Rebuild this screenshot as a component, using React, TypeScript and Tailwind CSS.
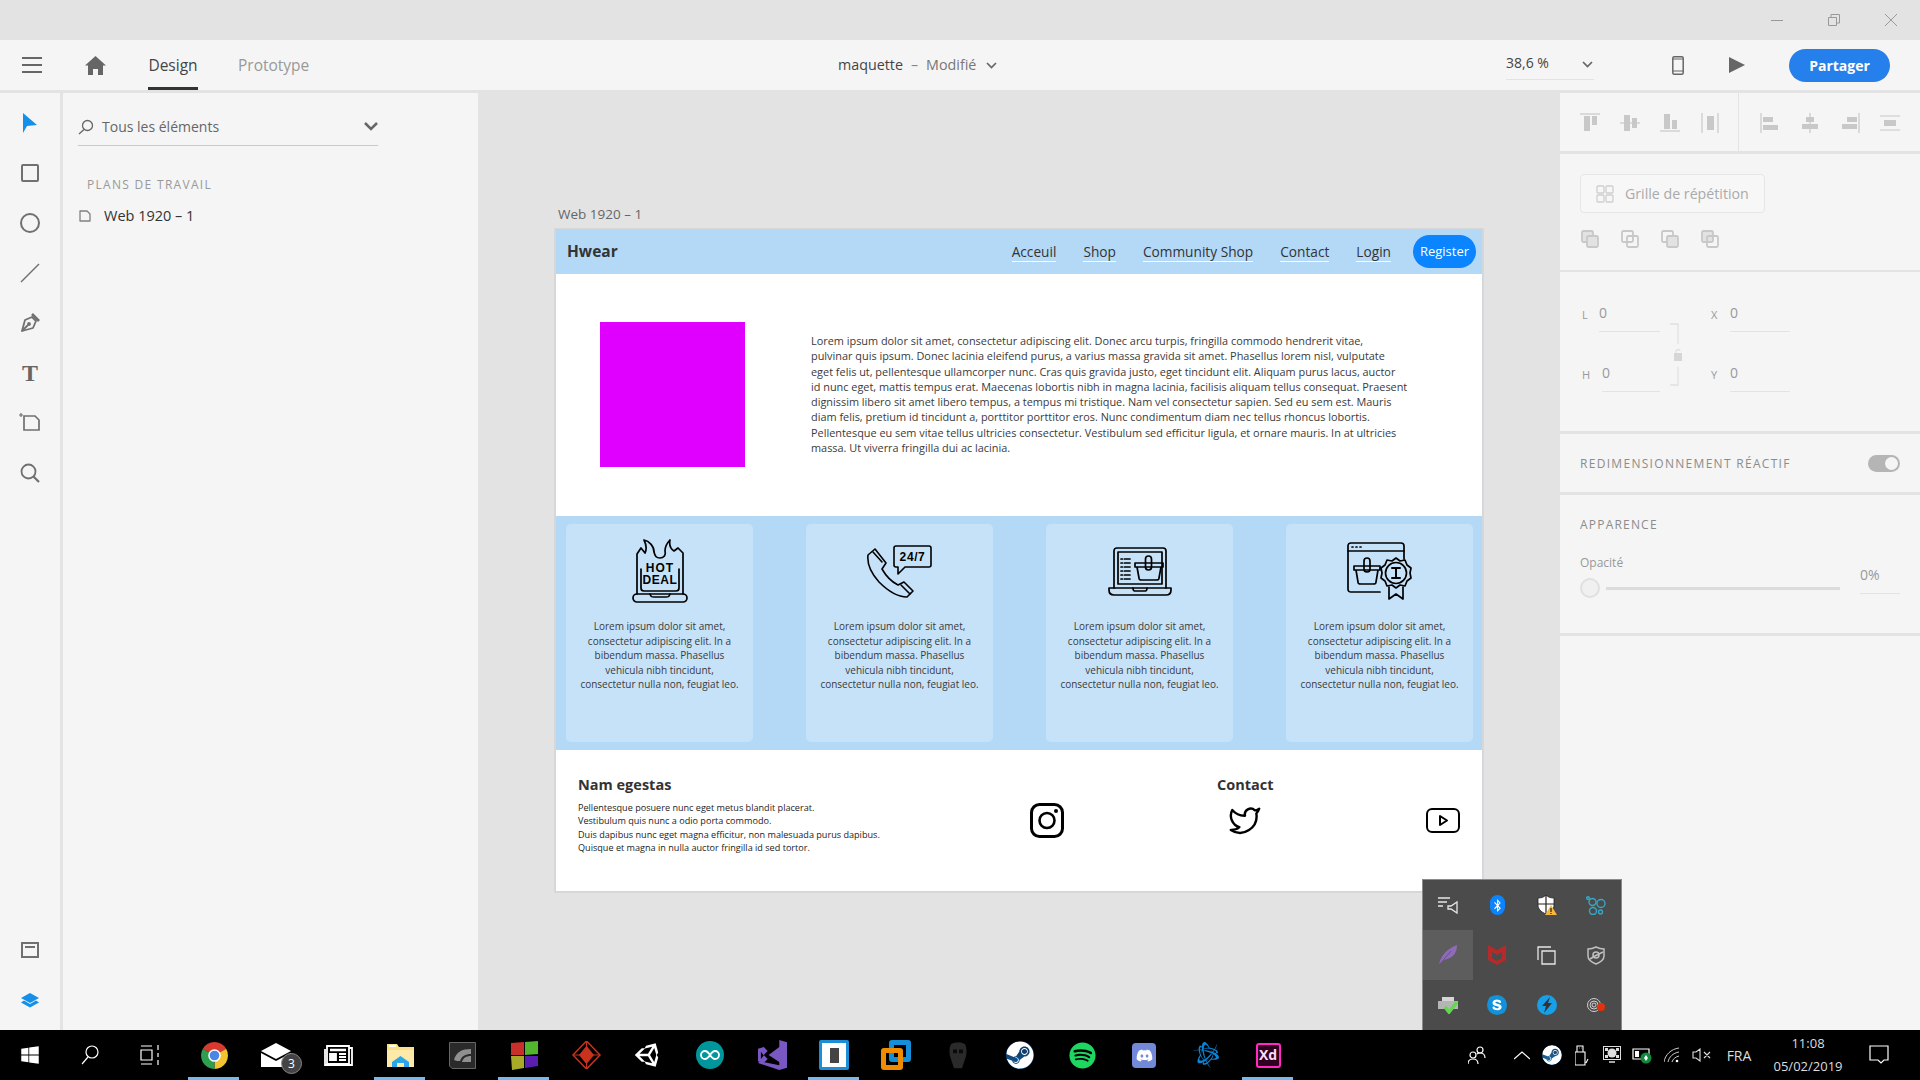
import React from 'react';
import { FaBluetoothB, FaDiscord, FaSkype, FaSpotify, FaSteam, FaUnity, FaWindows } from 'react-icons/fa';
import { FaBattleNet } from 'react-icons/fa6';
import { Twitter } from 'lucide-react';

const lorem = [
  'Lorem ipsum dolor sit amet, consectetur adipiscing elit. Donec arcu turpis, fringilla commodo hendrerit vitae,',
  'pulvinar quis ipsum. Donec lacinia eleifend purus, a varius massa gravida sit amet. Phasellus lorem nisl, vulputate',
  'eget felis ut, pellentesque ullamcorper nunc. Cras quis gravida justo, eget tincidunt elit. Aliquam purus lacus, auctor',
  'id nunc eget, mattis tempus erat. Maecenas lobortis nibh in magna lacinia, facilisis aliquam tellus consequat. Praesent',
  'dignissim libero sit amet libero tempus, a tempus mi tristique. Nam vel consectetur sapien. Sed eu sem est. Mauris',
  'diam felis, pretium id tincidunt a, porttitor porttitor eros. Nunc condimentum diam nec tellus rhoncus lobortis.',
  'Pellentesque eu sem vitae tellus ultricies consectetur. Vestibulum sed efficitur ligula, et ornare mauris. In at ultricies',
  'massa. Ut viverra fringilla dui ac lacinia.',
];

const cardLines = [
  'Lorem ipsum dolor sit amet,',
  'consectetur adipiscing elit. In a',
  'bibendum massa. Phasellus',
  'vehicula nibh tincidunt,',
  'consectetur nulla non, feugiat leo.',
];

const footerLines = [
  'Pellentesque posuere nunc eget metus blandit placerat.',
  'Vestibulum quis nunc a odio porta commodo.',
  'Duis dapibus nunc eget magna efficitur, non malesuada purus dapibus.',
  'Quisque et magna in nulla auctor fringilla id sed tortor.',
];

const HotDealIcon = () => (
  <svg width="56" height="64" viewBox="0 0 56 64" fill="none" stroke="#000" strokeWidth="1.7" strokeLinejoin="round" strokeLinecap="round">
    <rect x="1" y="55" width="54" height="8" rx="4" />
    <path d="M18 55c1 3 2 3 4 3h12c2 0 3 0 4-3" />
    <path d="M5 55V15l4-6 4 5c2-4 1-9-1-13 5 1 10 6 10 12 1 4 2 6 6 6 4 0 6-3 5-7 0-4 2-8 5-11-1 5 1 9 4 11l4-3 5 5v41" />
    <path d="M9 30v19c0 2 1 3 3 3h32c2 0 3-1 3-3V30" />
    <text x="28" y="33" textAnchor="middle" fontFamily="'Liberation Sans', sans-serif" fontWeight="700" fontSize="12" fill="#000" stroke="none" letterSpacing="1">HOT</text>
    <text x="28" y="45" textAnchor="middle" fontFamily="'Liberation Sans', sans-serif" fontWeight="700" fontSize="12" fill="#000" stroke="none" letterSpacing="0.6">DEAL</text>
  </svg>
);

const PhoneIcon = () => (
  <svg width="65" height="53" viewBox="0 0 65 53" fill="none" stroke="#000" strokeWidth="1.6" strokeLinejoin="round" strokeLinecap="round">
    <path d="M8 4 1 10c-1 8 3 18 11 27 8 8 18 15 28 15l6-6-9-9-6 3c-6-3-12-9-16-16l4-6z" />
    <path d="m6 7 9 10M34 40l9 9" />
    <path d="M29 1h33c1 0 2 1 2 2v17c0 1-1 2-2 2H38l-7 7v-7h-2c-1 0-2-1-2-2V3c0-1 1-2 2-2z" />
    <text x="45.5" y="16" textAnchor="middle" fontFamily="'Liberation Sans', sans-serif" fontWeight="700" fontSize="12" fill="#000" stroke="none" letterSpacing="0.6">24/7</text>
  </svg>
);

const LaptopBasketIcon = () => (
  <svg width="64" height="49" viewBox="0 0 64 49" fill="none" stroke="#000" strokeWidth="1.7" strokeLinejoin="round" strokeLinecap="round">
    <path d="M6 41V4c0-2 1-3 3-3h46c2 0 3 1 3 3v37" />
    <path d="M10 37V5h44v32z" />
    <path d="M1 41h62v2c0 3-2 5-5 5H6c-3 0-5-2-5-5z" />
    <path d="M25 41c0 3 1 3 3 3h8c2 0 3 0 3-3" />
    <path d="M13 12h9M13 16h9M13 20h9M13 24h9M13 28h9M13 32h9" strokeDasharray="1.5 2 6 0" />
    <path d="M27 16h28v4H27zM29 20l2 11c0 2 1 2 3 2h14c2 0 3 0 3-2l2-11" />
    <rect x="37.5" y="9" width="6" height="14" rx="3" />
  </svg>
);

const BadgeBasketIcon = () => (
  <svg width="65" height="58" viewBox="0 0 65 58" fill="none" stroke="#000" strokeWidth="1.7" strokeLinejoin="round" strokeLinecap="round">
    <path d="M33 50H4c-2 0-3-1-3-3V4c0-2 1-3 3-3h50c2 0 3 1 3 3v13" />
    <path d="M1 9h56" />
    <path d="M5 5h1M9 5h1M13 5h1" />
    <path d="M7 24h26v4H7zM9 28l2 12c0 2 1 2 3 2h12c2 0 3 0 3-2l2-12" />
    <rect x="17" y="16" width="6" height="14" rx="3" />
    <circle cx="49" cy="31" r="10.5" />
    <path d="m49 16 4 3 5-1 2 5 4 3-1 5 1 5-4 3-2 5-5-1-4 3-4-3-5 1-2-5-4-3 1-5-1-5 4-3 2-5 5 1z" />
    <path d="M45 26h8M45 36h8M49 26v10" strokeWidth="2" />
    <path d="M42 45v12l7-5 7 5V45" />
  </svg>
);

const YoutubeIcon = () => (
  <svg width="34" height="25" viewBox="0 0 34 25" fill="none" stroke="#000" strokeWidth="2" strokeLinejoin="round">
    <rect x="1" y="1" width="32" height="23" rx="5" />
    <path d="M14 8v9l7-4.5z" />
  </svg>
);

const InstagramIcon = () => (
  <svg width="34" height="35" viewBox="0 0 34 35" fill="none" stroke="#000" strokeWidth="3">
    <rect x="1.5" y="1.5" width="31" height="32" rx="8" />
    <circle cx="17" cy="17.5" r="7.5" strokeWidth="2.6" />
    <circle cx="26" cy="8" r="2" fill="#000" stroke="none" />
  </svg>
);

const Card = ({ icon }: { icon: React.ReactNode }) => (
  <div className="bg-[#c6e2f9] rounded-[5px] h-[218px] pt-[15px] flex flex-col items-center">
    <div className="h-[64px] flex items-center justify-center">{icon}</div>
    <div className="mt-[16px] text-center text-[10px] leading-[14.5px] text-[#3a3a3a]">
      {cardLines.map((l) => (
        <div key={l} className="whitespace-nowrap">{l}</div>
      ))}
    </div>
  </div>
);

const NavLink = ({ children }: { children: React.ReactNode }) => (
  <span className="text-[13.7px] leading-[19px] text-[#333] border-b border-white whitespace-nowrap">{children}</span>
);

const ToolIcon = ({ children }: { children: React.ReactNode }) => (
  <div className="h-[50px] w-full flex items-center justify-center">{children}</div>
);

const LeftToolbar = () => (
  <div className="w-[60px] bg-[#f5f5f5] flex flex-col pt-[5px] pb-[5px]">
    <ToolIcon>
      <svg width="16" height="22" viewBox="0 0 16 22"><path d="M1 1l14 12-10 1-4 7z" fill="#1490ea" /></svg>
    </ToolIcon>
    <ToolIcon><div className="w-[18px] h-[18px] border-[2px] border-[#707070] rounded-[2px]" /></ToolIcon>
    <ToolIcon><div className="w-[20px] h-[20px] border-[2px] border-[#707070] rounded-full" /></ToolIcon>
    <ToolIcon>
      <svg width="20" height="20" viewBox="0 0 20 20"><path d="M1 19 19 1" stroke="#707070" strokeWidth="1.5" /></svg>
    </ToolIcon>
    <ToolIcon>
      <svg width="20" height="20" viewBox="0 0 20 20" fill="none" stroke="#707070" strokeWidth="1.8" strokeLinejoin="round" className="-mt-[1px]">
        <path d="M2 18 5 7l7-3 4 4-3 7z" /><path d="M2 18l6-6" /><path d="m12 1 7 7" strokeWidth="2.6" /><circle cx="9" cy="11" r="1" />
      </svg>
    </ToolIcon>
    <ToolIcon>
      <span className="font-['Liberation_Serif',serif] font-bold text-[24px] leading-none text-[#666] -mt-[1px]">T</span>
    </ToolIcon>
    <ToolIcon>
      <svg width="22" height="20" viewBox="0 0 22 20" fill="none" stroke="#707070" strokeWidth="1.7">
        <path d="M5 3h11l4 4v10H5z" /><path d="M0 2h4M2 0v4" strokeWidth="1.2" />
      </svg>
    </ToolIcon>
    <ToolIcon>
      <svg width="20" height="20" viewBox="0 0 20 20" fill="none" stroke="#707070" strokeWidth="1.8">
        <circle cx="8.500" cy="8.500" r="7" /><path d="m13.500 13.500 5.500 5.500" strokeWidth="2.200" />
      </svg>
    </ToolIcon>
    <div className="flex-1" />
    <ToolIcon>
      <svg width="18" height="16" viewBox="0 0 18 16" fill="none" stroke="#707070" strokeWidth="2">
        <rect x="1" y="1" width="16" height="14" /><path d="M4 5h10" />
      </svg>
    </ToolIcon>
    <ToolIcon>
      <svg width="20" height="15" viewBox="0 0 20 15" fill="#1490ea">
        <path d="M10 0l9 5-9 5-9-5z" /><path d="M4 7.500 10 11l6-3.500 3 2-9 5-9-5z" />
      </svg>
    </ToolIcon>
  </div>
);

const LeftPanel = () => (
  <div className="w-[415px] bg-[#f5f5f5] ml-[3px] mr-[2px] pl-[15px]">
    <div className="w-[300px] h-[53px] border-b border-[#c9c9c9] flex items-center pt-[14px] mb-[31px]">
      <svg width="16" height="16" viewBox="0 0 16 16" fill="none" stroke="#666" strokeWidth="1.300" className="mr-[8px] mt-[2px]">
        <circle cx="9.500" cy="6.500" r="5" /><path d="M6 10.500 1 15" />
      </svg>
      <span className="text-[14px] text-[#666]">Tous les éléments</span>
      <svg width="14" height="9" viewBox="0 0 14 9" fill="none" stroke="#666" strokeWidth="2.500" className="ml-auto">
        <path d="m1 1 6 6 6-6" />
      </svg>
    </div>
    <div className="ml-[9px] text-[12px] leading-[16px] tracking-[1.300px] text-[#999] mb-[13px] whitespace-nowrap">PLANS DE TRAVAIL</div>
    <div className="flex items-center ml-[1px]">
      <svg width="12" height="12" viewBox="0 0 12 12" fill="none" stroke="#808080" strokeWidth="1.300" className="mr-[13px]">
        <path d="M1 1h7l3 3v7H1z" strokeLinejoin="round" />
      </svg>
      <span className="text-[14.500px] leading-[20px] text-[#333]">Web 1920 – 1</span>
    </div>
  </div>
);

const Artboard = () => (
  <div className="w-[928px] h-[663px] bg-white border-x border-b border-[#d3d7da] shadow-[0_0_0_1px_#d8d8d8] flex flex-col">
    <div className="h-[45px] bg-[#b3d9f7] flex items-center pl-[11px] pr-[6px]">
      <span className="text-[15.500px] font-bold text-[#333]">Hwear</span>
      <div className="ml-auto flex items-center gap-[27px]">
        <NavLink>Acceuil</NavLink>
        <NavLink>Shop</NavLink>
        <NavLink>Community Shop</NavLink>
        <NavLink>Contact</NavLink>
        <NavLink>Login</NavLink>
      </div>
      <div className="ml-[22px] w-[63px] h-[33px] rounded-full bg-[#0a84ff] text-white text-[13px] flex items-center justify-center">Register</div>
    </div>
    <div className="h-[242px] flex pl-[44px] pt-[48px]">
      <div className="w-[145px] h-[145px] bg-[#e000ff]" />
      <div className="ml-[66px] mt-[11px] text-[10.900px] leading-[15.300px] text-[#3a3a3a]">
        {lorem.map((l) => (
          <div key={l} className="whitespace-nowrap">{l}</div>
        ))}
      </div>
    </div>
    <div className="h-[234px] bg-[#b3d9f7] pl-[10px] pr-[9px] pt-[8px] grid grid-cols-4 gap-x-[53px] items-start">
      <Card icon={<HotDealIcon />} />
      <Card icon={<PhoneIcon />} />
      <Card icon={<LaptopBasketIcon />} />
      <Card icon={<BadgeBasketIcon />} />
    </div>
    <div className="flex-1 flex pl-[22px] pt-[25px]">
      <div className="w-[452px]">
        <div className="text-[14.500px] leading-[20px] font-bold text-[#333]">Nam egestas</div>
        <div className="mt-[6px] text-[9.100px] leading-[13.300px] text-[#222]">
          {footerLines.map((l) => (
            <div key={l} className="whitespace-nowrap">{l}</div>
          ))}
        </div>
      </div>
      <div className="w-[187px] pt-[28px]"><InstagramIcon /></div>
      <div className="w-[209px]">
        <div className="text-[14.500px] leading-[20px] font-bold text-[#333]">Contact</div>
        <div className="ml-[11px] mt-[8px]"><Twitter size={34} strokeWidth={1.7} color="#000" /></div>
      </div>
      <div className="pt-[33px]"><YoutubeIcon /></div>
    </div>
  </div>
);

const AlignIcon = ({ d, lines }: { d: string; lines: string }) => (
  <svg width="20" height="20" viewBox="0 0 20 20">
    <path d={d} fill="#c8c8c8" />
    <path d={lines} stroke="#c8c8c8" strokeWidth="1.200" fill="none" />
  </svg>
);

const BoolIcon = ({ fillA, fillB }: { fillA?: boolean; fillB?: boolean }) => (
  <svg width="18" height="18" viewBox="0 0 18 18" fill="none" stroke="#c8c8c8" strokeWidth="1.800">
    <rect x="1" y="1" width="11" height="11" rx="1.500" fill={fillA ? '#e2e2e2' : 'none'} />
    <rect x="6" y="6" width="11" height="11" rx="1.500" fill={fillB ? '#e2e2e2' : 'none'} />
  </svg>
);

const RightPanel = () => (
  <div className="w-[360px] flex flex-col bg-[#e3e3e3]">
    <div className="h-[58px] bg-[#f5f5f5] flex">
      <div className="w-[179px] border-r border-[#e3e3e3] flex items-center pl-[20px] pt-[2px] gap-[20px]">
        <AlignIcon d="M4 3h6v15H4zM12 3h5v9h-5z" lines="M0 1h20" />
        <AlignIcon d="M4 2h6v16H4zM12 5h5v10h-5z" lines="M0 10h20" />
        <AlignIcon d="M4 1h6v15H4zM12 7h5v9h-5z" lines="M0 18h20" />
        <AlignIcon d="M7 3h7v14H7z" lines="M2 0v20M18 0v20" />
      </div>
      <div className="flex-1 flex items-center pl-[21px] pt-[2px] gap-[20px]">
        <AlignIcon d="M3 4h10v5H3zM3 12h15v5H3z" lines="M1 0v20" />
        <AlignIcon d="M6 4h8v5H6zM2 11h16v5H2z" lines="M10 0v20" />
        <AlignIcon d="M7 4h10v5H7zM2 11h15v5H2z" lines="M19 0v20" />
        <AlignIcon d="M4 7h12v6H4z" lines="M0 3h20M0 17h20" />
      </div>
    </div>
    <div className="h-[116px] mt-[3px] bg-[#f5f5f5] pl-[20px] pt-[20px]">
      <div className="w-[185px] h-[39px] rounded-[4px] border border-[#e6e6e6] bg-[#f7f7f7] flex items-center pl-[15px]">
        <svg width="18" height="18" viewBox="0 0 18 18" fill="none" stroke="#cfcfcf" strokeWidth="1.300" className="mr-[11px]">
          <rect x="1" y="1" width="7" height="7" rx="1" /><rect x="10" y="1" width="7" height="7" rx="1" />
          <rect x="1" y="10" width="7" height="7" rx="1" /><rect x="10" y="10" width="7" height="7" rx="1" />
        </svg>
        <span className="text-[14.200px] text-[#aaa] whitespace-nowrap">Grille de répétition</span>
      </div>
      <div className="mt-[17px] flex gap-[22px] pl-[1px]">
        <BoolIcon fillA fillB />
        <BoolIcon />
        <BoolIcon fillB />
        <BoolIcon fillA />
      </div>
    </div>
    <div className="relative h-[159px] mt-[2px] bg-[#f5f5f5] pt-[31px] pl-[22px] text-[#aaa]">
      <div className="flex">
        <div className="w-[17px] pt-[4px] text-[11px] text-[#999]">L</div>
        <div className="w-[61px] h-[29px] border-b border-[#e3e3e3] text-[14px] leading-[20px] text-[#999]">0</div>
        <div className="ml-[51px] w-[19px] pt-[4px] text-[11px] text-[#999]">X</div>
        <div className="w-[60px] h-[29px] border-b border-[#e3e3e3] text-[14px] leading-[20px] text-[#999]">0</div>
      </div>
      <div className="flex mt-[31px]">
        <div className="w-[20px] pt-[4px] text-[11px] text-[#999]">H</div>
        <div className="w-[58px] h-[29px] border-b border-[#e3e3e3] text-[14px] leading-[20px] text-[#999]">0</div>
        <div className="ml-[51px] w-[19px] pt-[4px] text-[11px] text-[#999]">Y</div>
        <div className="w-[60px] h-[29px] border-b border-[#e3e3e3] text-[14px] leading-[20px] text-[#999]">0</div>
      </div>
      <svg width="14" height="64" viewBox="0 0 14 64" fill="none" stroke="#e0e0e0" strokeWidth="1.300" className="absolute left-[109px] top-[51px]">
        <path d="M1 1h8v20M9 44v18H1" />
        <path d="M5 30h8v8H5z" fill="#d6d6d6" stroke="none" />
        <path d="M7 30v-2c0-2 4-2 4 0" />
      </svg>
    </div>
    <div className="h-[58px] mt-[3px] bg-[#f5f5f5] pl-[20px] pr-[20px] pt-[1px] flex items-center justify-between">
      <span className="text-[12px] tracking-[1.300px] text-[#8c8c8c] whitespace-nowrap">REDIMENSIONNEMENT RÉACTIF</span>
      <div className="w-[32px] h-[17px] rounded-full bg-[#b5b5b5] flex items-center justify-end pr-[2px]">
        <div className="w-[13px] h-[13px] rounded-full bg-[#f5f5f5]" />
      </div>
    </div>
    <div className="h-[138px] mt-[3px] bg-[#f5f5f5] pl-[20px] pr-[20px] pt-[21px]">
      <div className="text-[12px] leading-[18px] tracking-[1.200px] text-[#8c8c8c]">APPARENCE</div>
      <div className="flex mt-[21px]">
        <div className="w-[260px]">
          <div className="text-[12px] leading-[16px] text-[#999]">Opacité</div>
          <div className="flex items-center mt-[7px]">
            <div className="w-[20px] h-[20px] rounded-full bg-[#f0f0f0] border-[2px] border-[#e0e0e0]" />
            <div className="ml-[6px] w-[234px] h-[3px] bg-[#dcdcdc]" />
          </div>
        </div>
        <div className="ml-[20px] mt-[10px] w-[40px] h-[29px] border-b border-[#e3e3e3] text-[14px] leading-[20px] text-[#999]">0%</div>
      </div>
    </div>
    <div className="flex-1 mt-[3px] bg-[#f5f5f5]" />
  </div>
);

const trayIcons: React.ReactNode[] = [
  <svg key="mix" width="20" height="18" viewBox="0 0 20 18" fill="none" stroke="#e6e6e6" strokeWidth="1.300">
    <path d="M0 2h12M0 6h9M0 10h5" /><path d="M10 10h3l6-4v11l-6-4h-3z" />
  </svg>,
  <div key="bt" className="w-[15px] h-[20px] rounded-full bg-[#0a84ff] flex items-center justify-center text-white">
    <FaBluetoothB size={13} />
  </div>,
  <svg key="shield" width="20" height="20" viewBox="0 0 20 20">
    <path d="M1 3c4 0 6-1 8-3 2 2 4 3 8 3v7c0 4-3 7-8 9-5-2-8-5-8-9z" fill="#fff" stroke="#222" strokeWidth="0.800" />
    <path d="M9 0v19M1 9h16" stroke="#222" strokeWidth="1.200" />
    <path d="M14 10l6 10H8z" fill="#f6b73c" />
    <path d="M14 13v4M14 18v1" stroke="#222" strokeWidth="1.200" />
  </svg>,
  <svg key="bubbles" width="20" height="19" viewBox="0 0 20 19" fill="none" stroke="#35a9c4" strokeWidth="1.400">
    <circle cx="2" cy="2" r="1.300" /><circle cx="6.500" cy="6" r="3.500" /><circle cx="15" cy="7.500" r="4" /><circle cx="7" cy="15" r="3.500" /><circle cx="14.500" cy="16" r="2" />
  </svg>,
  <svg key="feather" width="20" height="20" viewBox="0 0 20 20">
    <path d="M1 20C2 12 8 4 19 0c0 7-3 13-13 15z" fill="#8d6bb8" /><path d="M1 20 13 6" stroke="#5f4a85" strokeWidth="0.800" />
  </svg>,
  <svg key="mcafee" width="18" height="20" viewBox="0 0 18 20">
    <path d="M0 0l9 5 9-5v15l-9 5-9-5zM4 7v6l5 3 5-3V7l-5 3z" fill="#b52a2a" />
  </svg>,
  <svg key="copy" width="19" height="19" viewBox="0 0 19 19" fill="none" stroke="#e6e6e6" strokeWidth="1.300">
    <path d="M1 14V1h13" /><path d="M5 5h13v13H5z" />
  </svg>,
  <svg key="def" width="18" height="19" viewBox="0 0 18 19" fill="none" stroke="#c0c0c0" strokeWidth="1.500">
    <path d="M1 3c4 0 6-1 8-2 2 1 4 2 8 2v7c0 4-3 6-8 8-5-2-8-4-8-8z" /><circle cx="9" cy="9" r="3" /><path d="M3 13l5-3 8-4" />
  </svg>,
  <svg key="print" width="20" height="18" viewBox="0 0 20 18">
    <path d="M4 1h12v4H4z" fill="#d5d5d5" /><path d="M0 5h20v8H0z" fill="#b5b5b5" />
    <path d="m7 11 4 5 8-10" fill="none" stroke="#63d84e" strokeWidth="3.500" />
  </svg>,
  <div key="skype" className="w-[20px] h-[20px] rounded-full bg-[#1193dc] flex items-center justify-center relative">
    <div className="absolute w-[12px] h-[12px] bg-white rounded-full" />
    <FaSkype size={20} color="#1193dc" className="relative" />
  </div>,
  <div key="bolt" className="w-[20px] h-[20px] rounded-full bg-[#17a0e8] flex items-center justify-center">
    <svg width="10" height="16" viewBox="0 0 10 16"><path d="M8 0 0 9h4l-2 7 8-10H6z" fill="#333" /></svg>
  </div>,
  <svg key="rec" width="19" height="16" viewBox="0 0 19 16" fill="none" stroke="#cfcfcf" strokeWidth="1">
    <circle cx="7" cy="8" r="6.500" /><circle cx="7" cy="8" r="4" /><circle cx="7" cy="8" r="2" />
    <circle cx="14" cy="10" r="4" fill="#e2320c" stroke="none" />
  </svg>,
];

const TrayPopup = () => (
  <div className="absolute left-[1422px] top-[879px] w-[200px] h-[151px] bg-[#4b4b4b] border-t border-x border-[#8a8a8a] grid grid-cols-4 grid-rows-3">
    {trayIcons.map((icon, i) => (
      <div key={i} className={`h-[50px] flex items-center justify-center ${i === 4 ? 'bg-[#5d5d5d]' : ''}`}>{icon}</div>
    ))}
  </div>
);

const taskApps: { active?: boolean; icon: React.ReactNode }[] = [
  {
    active: true,
    icon: (
      <svg width="27" height="27" viewBox="0 0 28 28">
        <path d="M14 14 1.900 7A14 14 0 0 1 26.100 7z" fill="#d93a2f" />
        <path d="M14 14 26.100 7A14 14 0 0 1 14 28z" fill="#f4c430" />
        <path d="M14 14 14 28A14 14 0 0 1 1.900 7z" fill="#2f9e4f" />
        <circle cx="14" cy="14" r="6.500" fill="#fff" />
        <circle cx="14" cy="14" r="5" fill="#4a86e8" />
      </svg>
    ),
  },
  {
    icon: (
      <div className="relative w-[30px] h-[24px]">
        <svg width="30" height="24" viewBox="0 0 30 24">
          <path d="M0 8 15 0l15 8-15 8z" fill="#fff" />
          <path d="M0 10l15 8 15-8v14H0z" fill="#fff" />
        </svg>
        <div className="absolute left-[20px] top-[10px] w-[21px] h-[21px] rounded-full bg-[#444] border border-[#888] text-white text-[12px] flex items-center justify-center">3</div>
      </div>
    ),
  },
  {
    icon: (
      <svg width="29" height="21" viewBox="0 0 29 21" fill="none" stroke="#fff" strokeWidth="1.800">
        <path d="M3 1h22v18H3zM25 3h3v17H1V4" />
        <path d="M6 5h16" strokeWidth="2.500" /><path d="M6 9h6v6H6z" fill="#fff" /><path d="M15 9h7M15 12h7M15 15h7" />
      </svg>
    ),
  },
  {
    active: true,
    icon: (
      <svg width="27" height="23" viewBox="0 0 27 23">
        <path d="M0 0h10l2 3h15v20H0z" fill="#fbe08a" />
        <path d="M0 6h27v17H0z" fill="#fde9a8" />
        <path d="M5 23v-5l8.500-6 8.500 6v5h-5v-4h-7v4z" fill="#2aa7e8" />
        <path d="M2 1h7v2H2z" fill="#fff" />
      </svg>
    ),
  },
  {
    icon: (
      <svg width="27" height="27" viewBox="0 0 27 27">
        <path d="M0.500 0.500h26v26H3l-2.500-2.500z" fill="#2a2a2a" stroke="#666" />
        <path d="M5 18c2-8 8-11 17-11v5c-6 0-9 2-11 7h-3zM13 20c1-4 4-6 9-6v6z" fill="#8f8f8f" />
      </svg>
    ),
  },
  {
    active: true,
    icon: (
      <svg width="27" height="29" viewBox="0 0 27 29">
        <path d="M0 2 13 1v13H0z" fill="#c9302c" /><path d="M14 1l13-1v13l-13 1z" fill="#52b52e" />
        <path d="M0 15h13v12L1 29z" fill="#a9ab28" /><path d="M14 15h13v10l-13 2z" fill="#5a1fb0" />
      </svg>
    ),
  },
  {
    icon: (
      <svg width="29" height="28" viewBox="0 0 29 28" fill="none" stroke="#c8331e" strokeWidth="1.500">
        <path d="M14.500 0 28 14 14.500 28 1 14z" />
        <path d="M14.500 6 21 14l-6.500 8L8 14z" fill="#c8331e" /><path d="M14.500 0v28M1 14h27" strokeWidth="1" />
      </svg>
    ),
  },
  { icon: <FaUnity size={28} color="#fff" /> },
  {
    icon: (
      <div className="w-[28px] h-[28px] rounded-full bg-[#00979c] flex items-center justify-center">
        <svg width="20" height="10" viewBox="0 0 20 10" fill="none" stroke="#fff" strokeWidth="1.800">
          <path d="M10 5C8 2 7 1 5 1a4 4 0 0 0 0 8c2 0 3-1 5-4s3-4 5-4a4 4 0 0 1 0 8c-2 0-3-1-5-4z" />
        </svg>
      </div>
    ),
  },
  {
    icon: (
      <svg width="29" height="30" viewBox="0 0 30 38" preserveAspectRatio="none">
        <path d="M22 0l8 3v32l-8 3L0 29l2-2 20 5zM22 9 11 19l11 9zM0 11l6-2 4 5-4 5 4 5-4 5-6-2zM3 15v9l3-4.500z" fill="#7a58c4" />
      </svg>
    ),
  },
  {
    active: true,
    icon: (
      <div className="w-[30px] h-[30px] rounded-[2px] bg-[#1b8ed6] flex items-center justify-center">
        <div className="w-[24px] h-[24px] bg-white flex items-center justify-center">
          <div className="w-[9px] h-[15px] bg-[#444]" />
        </div>
      </div>
    ),
  },
  {
    icon: (
      <div className="relative w-[30px] h-[30px]">
        <div className="absolute right-0 top-0 w-[22px] h-[22px] border-[5px] border-[#1490d8] rounded-[3px]" />
        <div className="absolute left-0 bottom-0 w-[22px] h-[22px] border-[5px] border-[#f08c00] rounded-[3px]" />
      </div>
    ),
  },
  {
    icon: (
      <svg width="18" height="27" viewBox="0 0 18 36" preserveAspectRatio="none">
        <path d="M2 3c2-3 12-3 14 0 2 5 2 14 0 20l-3 12H5L2 23C0 17 0 8 2 3z" fill="#2a2a2a" />
        <path d="M4 10h4v5H4zM10 10h4v5h-4z" fill="#0a0a0a" />
      </svg>
    ),
  },
  {
    icon: (
      <div className="w-[28px] h-[28px] rounded-full bg-gradient-to-b from-[#0b2a55] to-[#15619c] flex items-center justify-center overflow-hidden">
        <FaSteam size={28} color="#fff" />
      </div>
    ),
  },
  {
    icon: (
      <div className="w-[27px] h-[27px] rounded-full bg-black flex items-center justify-center">
        <FaSpotify size={27} color="#1ed760" />
      </div>
    ),
  },
  {
    icon: (
      <div className="relative w-[24px] h-[25px] rounded-[4px] bg-[#7289da] flex items-center justify-center">
        <FaDiscord size={17} color="#fff" />
      </div>
    ),
  },
  { icon: <FaBattleNet size={26} color="#0a84d6" /> },
  {
    active: true,
    icon: (
      <div className="w-[25px] h-[25px] rounded-[3px] border-[2px] border-[#ff2bc2] bg-[#2e001f] flex items-center justify-center text-[14px] leading-none text-[#ffd9f5] font-bold">Xd</div>
    ),
  },
];

const trayStrip: { w: string; node: React.ReactNode }[] = [
  {
    w: 'w-[30px] mr-[15px]',
    node: (
      <svg width="18" height="19" viewBox="0 0 18 19" fill="none" stroke="#fff" strokeWidth="1.200">
        <circle cx="12" cy="4" r="3" /><circle cx="5" cy="9" r="3" /><path d="M0 18c0-3 2-5 5-5s5 2 5 5M9 8c1-1 2-1 3-1 3 0 5 2 5 5" />
      </svg>
    ),
  },
  {
    w: 'w-[30px]',
    node: <svg width="16" height="9" viewBox="0 0 16 9" fill="none" stroke="#fff" strokeWidth="1.200"><path d="m0 8 8-7 8 7" /></svg>,
  },
  {
    w: 'w-[30px]',
    node: (
      <div className="w-[20px] h-[20px] rounded-full bg-gradient-to-b from-[#1b3a63] to-[#1677b3] overflow-hidden">
        <FaSteam size={20} color="#fff" />
      </div>
    ),
  },
  {
    w: 'w-[30px]',
    node: (
      <svg width="14" height="21" viewBox="0 0 14 21" fill="none" stroke="#fff" strokeWidth="1.100">
        <path d="M2 1h6v6H2zM0 7h10v13H0zM13 14l-2 4" /><path d="M4 3h.500M6 3h.500" />
      </svg>
    ),
  },
  {
    w: 'w-[30px]',
    node: (
      <svg width="18" height="18" viewBox="0 0 18 18">
        <rect x="0.500" y="0.500" width="17" height="13" fill="none" stroke="#ddd" />
        <circle cx="9" cy="7" r="4.500" fill="#ddd" /><path d="M2 2h3v3H2zM13 2h3v3h-3zM2 9h3v3H2zM13 9h3v3h-3z" fill="#ddd" />
        <path d="M6 16h6" stroke="#ddd" strokeWidth="1.500" />
      </svg>
    ),
  },
  {
    w: 'w-[30px]',
    node: (
      <svg width="20" height="18" viewBox="0 0 20 18">
        <path d="M1 3h16v10H1z" fill="none" stroke="#fff" strokeWidth="1.200" /><path d="M3 5h4v6H3z" fill="#fff" />
        <circle cx="14" cy="12" r="5.500" fill="#0f8a3c" /><path d="M14 9l2 3-2 3-2-3z" fill="#fff" />
      </svg>
    ),
  },
  {
    w: 'w-[30px]',
    node: (
      <svg width="16" height="16" viewBox="0 0 16 16" fill="none" stroke="#ccc" strokeWidth="1">
        <path d="M0 15C1 8 7 2 15 1M4 15c1-5 5-9 11-10M8 15c1-3 3-5 7-6" /><circle cx="13" cy="14" r="1.300" fill="#fff" stroke="none" />
      </svg>
    ),
  },
  {
    w: 'w-[30px]',
    node: (
      <svg width="20" height="14" viewBox="0 0 20 14" fill="none" stroke="#ddd" strokeWidth="1.100">
        <path d="M1 4h3l4-3v12l-4-3H1zM12 4l6 6M18 4l-6 6" />
      </svg>
    ),
  },
];

const Taskbar = () => (
  <div className="h-[50px] bg-black flex text-white">
    <div className="w-[60px] h-full flex items-center justify-center"><FaWindows size={20} color="#fff" /></div>
    <div className="w-[60px] h-full flex items-center justify-center">
      <svg width="18" height="20" viewBox="0 0 18 20" fill="none" stroke="#fff" strokeWidth="1.200">
        <circle cx="11" cy="7" r="6" /><path d="M7 12 1 19" />
      </svg>
    </div>
    <div className="w-[60px] h-full flex items-center justify-center">
      <svg width="20" height="20" viewBox="0 0 20 20" fill="none" stroke="#fff" strokeWidth="1.200">
        <path d="M1 1h11M1 5h11v10H1zM1 19h11M18 0v5M18 8v4M18 15v5" />
      </svg>
    </div>
    <div className="ml-[3px] flex">
      {taskApps.map((app, i) => (
        <div key={i} className="relative w-[62px] h-[50px] flex items-center justify-center">
          {app.icon}
          {app.active && <div className="absolute bottom-0 left-[5px] w-[51px] h-[3px] bg-[#76b9ed]" />}
        </div>
      ))}
    </div>
    <div className="ml-auto pr-[21px] h-full flex">
      {trayStrip.map((t, i) => (
        <div key={i} className={`${t.w} h-full flex items-center justify-center`}>{t.node}</div>
      ))}
      <div className="w-[44px] h-full flex items-center justify-center text-[14px] text-[#ddd]">FRA</div>
      <div className="ml-[2px] w-[90px] h-full flex flex-col items-center justify-center text-[13px] leading-[23px] text-[#ddd]">
        <span>11:08</span>
        <span>05/02/2019</span>
      </div>
      <div className="ml-[6px] w-[40px] h-full flex items-center justify-center">
        <svg width="20" height="20" viewBox="0 0 20 20" fill="none" stroke="#fff" strokeWidth="1.200">
          <path d="M1 1h18v14h-4l-3 3-3-3H1z" />
        </svg>
      </div>
    </div>
  </div>
);

const App: React.FC = () => {
  return (
    <div className="w-[1920px] h-[1080px] relative overflow-hidden flex flex-col bg-[#e3e3e3] font-['Open_Sans',sans-serif]">
      <div className="h-[40px] bg-[#e3e3e3] flex justify-end items-center pr-[23px] gap-[45px]">
        <div className="w-[12px] h-px bg-[#999]" />
        <svg width="12" height="12" viewBox="0 0 12 12" fill="none" stroke="#999"><path d="M0.500 3.500h8v8h-8zM3 3.500V.5h8.500V9H8.500" /></svg>
        <svg width="12" height="12" viewBox="0 0 12 12" fill="none" stroke="#999"><path d="m0 0 12 12M12 0 0 12" /></svg>
      </div>

      <div className="h-[50px] bg-[#f5f5f5] flex items-center">
        <svg width="20" height="16" viewBox="0 0 20 16" className="ml-[22px]" fill="#666">
          <path d="M0 0h20v2H0zM0 7h20v2H0zM0 14h20v2H0z" />
        </svg>
        <svg width="21" height="19" viewBox="0 0 21 19" className="ml-[43px]" fill="#666">
          <path d="M10.500 0 21 9.500h-3V19h-5v-6H8v6H3V9.500H0z" />
        </svg>
        <div className="ml-[42px] h-full w-[50px] border-b-[3px] border-[#333] flex items-center justify-center text-[15.500px] text-[#444] pt-[4px] whitespace-nowrap">Design</div>
        <div className="ml-[40px] w-[70px] text-[15.500px] text-[#999] pt-[2px] whitespace-nowrap">Prototype</div>
        <div className="ml-[530px] flex items-center text-[14.300px]">
          <span className="text-[#444]">maquette</span>
          <span className="text-[#888] ml-[8px]">–</span>
          <span className="text-[#777] ml-[8px]">Modifié</span>
          <svg width="11" height="7" viewBox="0 0 11 7" fill="none" stroke="#666" strokeWidth="1.700" className="ml-[10px]"><path d="m1 1 4.500 4.500L10 1" /></svg>
        </div>
        <div className="ml-auto flex items-center pr-[30px]">
          <div className="w-[88px] h-[28px] border-b border-[#e3e3e3] flex items-start justify-between pr-[1px] pt-[1px] text-[14px] leading-[20px] text-[#444] whitespace-nowrap mt-[2px]">
            38,6 %
            <svg width="11" height="7" viewBox="0 0 11 7" fill="none" stroke="#666" strokeWidth="1.700" className="mt-[8px]"><path d="m1 1 4.500 4.500L10 1" /></svg>
          </div>
          <svg width="12" height="19" viewBox="0 0 12 19" className="ml-[78px]" fill="none" stroke="#666" strokeWidth="1.500">
            <rect x="0.800" y="0.800" width="10.400" height="17.400" rx="1.500" /><path d="M1 15h10M1 3h10" strokeWidth="1" />
          </svg>
          <svg width="16" height="16" viewBox="0 0 16 16" className="ml-[45px]" fill="#666"><path d="M0 0v16l16-8z" /></svg>
          <div className="ml-[44px] w-[101px] h-[33px] rounded-full bg-[#2680eb] text-white text-[14px] font-bold flex items-center justify-center">Partager</div>
        </div>
      </div>

      <div className="h-[940px] flex border-t-[3px] border-[#e3e3e3]">
        <LeftToolbar />
        <LeftPanel />
        <div className="w-[1080px] pl-[75px] pt-[111px] bg-[#e3e3e3] flex flex-col">
          <div className="ml-[3px] h-[20px] text-[13.500px] leading-[20px] text-[#666]">Web 1920 – 1</div>
          <div className="mt-[5px]"><Artboard /></div>
        </div>
        <RightPanel />
      </div>

      <Taskbar />
      <TrayPopup />
    </div>
  );
};

export default App;
